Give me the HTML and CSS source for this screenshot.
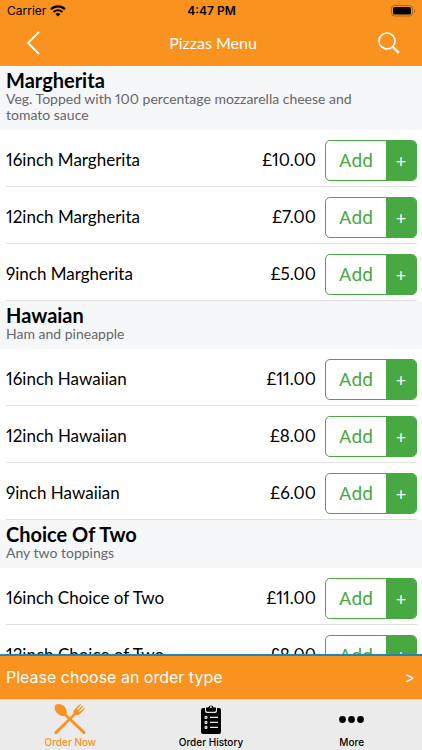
FILE: index.html
```html
<!DOCTYPE html>
<html lang="en">
<head>
<meta charset="utf-8">
<meta name="viewport" content="width=device-width, initial-scale=1">
<title>Pizzas Menu</title>
<link rel="stylesheet" href="styles.css">
</head>
<body>
<header class="top">
  <div class="status">
    <span class="carrier">Carrier
      <svg width="16" height="12" viewBox="0 0 16 12" aria-hidden="true"><g fill="none" stroke="#000" stroke-width="2.1"><path d="M1 4.2a10 10 0 0 1 14 0"/><path d="M3.6 7a6.3 6.3 0 0 1 8.800 0"/></g><path d="M8 11.600 5.500 9.100a3.600 3.600 0 0 1 5 0z"/></svg>
    </span>
    <span class="time">4:47 PM</span>
    <svg class="battery" width="25" height="12" viewBox="0 0 25 12" aria-hidden="true"><rect x=".5" y=".5" width="21" height="10.5" rx="3" fill="none" stroke="#a8671c"/><rect x="2" y="2" width="18" height="7.500" rx="1.500"/><path d="M23 4v4q1.300-.6 1.300-2T23 4" fill="#a8671c"/></svg>
  </div>
  <div class="nav">
    <button class="icon-btn" aria-label="Back"><svg width="14" height="24" viewBox="0 0 14 24"><path d="M13 1 2 12l11 11" fill="none" stroke="#fff" stroke-width="1.900"/></svg></button>
    <h1>Pizzas Menu</h1>
    <button class="icon-btn search" aria-label="Search"><svg width="22" height="22" viewBox="0 0 22 22" fill="none" stroke="#fff"><circle cx="9" cy="9" r="8" stroke-width="1.600"/><path d="m14.800 14.800 6 6" stroke-width="2.400"/></svg></button>
  </div>
</header>
<main>
  <section>
    <div class="head"><h2>Margherita</h2><p>Veg. Topped with 100 percentage mozzarella cheese and tomato sauce</p></div>
    <ul>
      <li><span class="name">16inch Margherita</span><span class="price">£10.00</span><button class="add"><span class="label">Add</span><span class="plus">+</span></button></li>
      <li><span class="name">12inch Margherita</span><span class="price">£7.00</span><button class="add"><span class="label">Add</span><span class="plus">+</span></button></li>
      <li><span class="name">9inch Margherita</span><span class="price">£5.00</span><button class="add"><span class="label">Add</span><span class="plus">+</span></button></li>
    </ul>
  </section>
  <section>
    <div class="head"><h2>Hawaian</h2><p>Ham and pineapple</p></div>
    <ul>
      <li><span class="name">16inch Hawaiian</span><span class="price">£11.00</span><button class="add"><span class="label">Add</span><span class="plus">+</span></button></li>
      <li><span class="name">12inch Hawaiian</span><span class="price">£8.00</span><button class="add"><span class="label">Add</span><span class="plus">+</span></button></li>
      <li><span class="name">9inch Hawaiian</span><span class="price">£6.00</span><button class="add"><span class="label">Add</span><span class="plus">+</span></button></li>
    </ul>
  </section>
  <section>
    <div class="head"><h2>Choice Of Two</h2><p>Any two toppings</p></div>
    <ul>
      <li><span class="name">16inch Choice of Two</span><span class="price">£11.00</span><button class="add"><span class="label">Add</span><span class="plus">+</span></button></li>
      <li><span class="name">12inch Choice of Two</span><span class="price">£8.00</span><button class="add"><span class="label">Add</span><span class="plus">+</span></button></li>
    </ul>
  </section>
</main>
<button class="order-type"><span>Please choose an order type</span><span>&gt;</span></button>
<nav class="tabs" aria-label="Main">
  <a href="#order" class="active">
    <svg width="34" height="32" viewBox="0 0 34 33" aria-hidden="true"><g fill="currentColor"><path d="M2 2c2.500-2 7-1 9.500 1.800 2 2.300 2.600 5.200 2 7.700L32.600 29.500q1 1.200 0 2.200t-2.200 0L11.600 13.300c-2.500.5-5-.2-7.200-2.200C1.500 8.400.2 4.200 2 2z"/><path d="m1.400 29.500 19.400-18.800c-.5-2 .3-3.700 1.700-5L27.500 1l.8.8-4.300 4.800.8.8 4.900-4.500.8.8-4.500 4.900.8.8 4.800-4.300.8.8-4.800 5c-1.400 1.400-3 2.100-4.800 1.600L3.600 31.700q-1.200 1-2.200 0t0-2.200z"/></g></svg>
    <span>Order Now</span>
  </a>
  <a href="#history">
    <svg width="22" height="31" viewBox="0 0 22 31" aria-hidden="true"><path d="M3 4h2v3q0 2 2 2h8q2 0 2-2V4h2q2 0 2 2v22q0 2-2 2H3q-2 0-2-2V6q0-2 2-2z"/><path d="M6 3.500h2.300a2.800 2.800 0 0 1 5.400 0H16V6q0 1.700-1.500 1.700h-7Q6 7.700 6 6z"/><circle cx="11" cy="3" r=".9" fill="#ebebeb"/><g stroke="#ebebeb" fill="#ebebeb"><path d="M10 13.400h8M10 18.400h8M10 23.400h8" stroke-width="1.300"/><path d="M5 12.400h2v2H5zM5 17.400h2v2H5zM5 22.400h2v2H5z" fill="#777"/></g></svg>
    <span>Order History</span>
  </a>
  <a href="#more">
    <svg width="25" height="31" viewBox="0 0 25 31" aria-hidden="true"><circle cx="3.500" cy="15.500" r="3.400"/><circle cx="12.500" cy="15.500" r="3.400"/><circle cx="21.500" cy="15.500" r="3.400"/></svg>
    <span>More</span>
  </a>
</nav>
</body>
</html>
```
FILE: styles.css
```css
* { box-sizing: border-box; }
body {
  margin: 0;
  height: 100vh;
  display: flex;
  flex-direction: column;
  overflow: hidden;
  background: #fff;
  color: #000;
  font-family: Lato, "Open Sans", sans-serif;
  font-variant-numeric: proportional-nums;
}
h1, h2, p, ul { margin: 0; padding: 0; }
button { border: 0; padding: 0; background: none; font: inherit; color: inherit; cursor: pointer; }
svg { display: block; }

.top { flex: none; background: #f9921f; }
.status {
  height: 22px;
  padding: 0 6px 0 7px;
  display: grid;
  grid-template-columns: 1fr auto 1fr;
  align-items: center;
  font: 12px/22px Inter, sans-serif;
}
.carrier { display: flex; align-items: center; gap: 4px; }
.time { font-weight: 600; }
.battery { justify-self: end; }
.nav {
  height: 44px;
  padding: 0 22px 2px 26px;
  display: grid;
  grid-template-columns: 1fr auto 1fr;
  align-items: center;
}
.nav h1 { font-size: 16px; font-weight: 400; line-height: 22px; color: #fff; }
.icon-btn { justify-self: start; }
.search { justify-self: end; }

main { flex: 1; min-height: 0; overflow: hidden; }
.head { background: #f6f7f9; padding: 3px 48px 7px 6px; }
.head h2 { font-size: 20px; font-weight: 700; line-height: 22px; }
.head p { font-size: 14px; line-height: 16px; color: #666; }
ul { list-style: none; padding: 0 5px 0 6px; }
li {
  height: 57px;
  border-bottom: 1px solid #e0e0e0;
  display: flex;
  align-items: center;
  gap: 9px;
  padding-top: 4px;
  font-size: 17px;
}
.name, .price { padding-bottom: 1px; }
.name { flex: 1; }
.add {
  width: 92px;
  height: 41px;
  display: flex;
  align-items: stretch;
  border: 1px solid #48a842;
  border-radius: 5px;
  overflow: hidden;
  line-height: 40px;
}
.label { flex: 1; color: #48a842; font: 400 19px/40px Roboto, sans-serif; }
.plus { width: 30px; background: #48a842; color: #fff; font-size: 18px; }

.order-type {
  flex: none;
  display: flex;
  justify-content: space-between;
  align-items: center;
  height: 45px;
  padding: 0 7px 2px 6px;
  border-top: 2px solid #1b87bb;
  background: #f9921f;
  color: #fff;
  font: 16px/22px Inter, sans-serif;
}
.tabs {
  flex: none;
  height: 51px;
  display: grid;
  grid-template-columns: repeat(3, 1fr);
  background: #ebebeb;
  border-top: 1px solid #e5d3bf;
}
.tabs a {
  display: flex;
  flex-direction: column;
  align-items: center;
  justify-content: flex-end;
  gap: 1px;
  padding-bottom: 2px;
  color: #000;
  text-decoration: none;
  font: 500 10px/12px Inter, sans-serif;
}
.tabs .active { color: #f9921f; }
```
